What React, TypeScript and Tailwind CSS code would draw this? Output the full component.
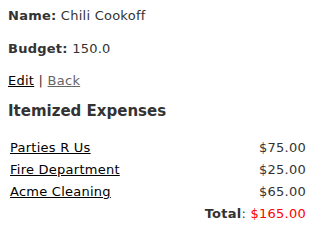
export default function App() {
  return (
    <div className="bg-white w-[323px] h-[237px] px-[8px] pt-[6px] text-[13px] leading-[20px] text-[#333] tracking-[0.25px]" style={{ fontFamily: '"DejaVu Sans", Verdana, sans-serif' }}>
      <p className="mb-[13px]"><b>Name:</b> Chili Cookoff</p>
      <p className="mb-[12px]"><b>Budget:</b> 150.0</p>
      <p className="mb-[10px]">
        <a href="#" className="underline text-black">Edit</a> | <a href="#" className="underline text-[#666]">Back</a>
      </p>
      <h3 className="text-[15px] font-bold leading-[20px] mb-[15px] tracking-normal">Itemized Expenses</h3>
      <table className="w-[300px] border-separate border-spacing-[2px]">
        <tbody>
          {[["Parties R Us", "$75.00"], ["Fire Department", "$25.00"], ["Acme Cleaning", "$65.00"]].map(([n, a]) => (
            <tr key={n}>
              <td className="p-0 leading-[20px]"><a href="#" className="underline text-black">{n}</a></td>
              <td className="p-0 text-right leading-[20px]">{a}</td>
            </tr>
          ))}
          <tr>
            <td></td>
            <td className="p-0 text-right leading-[20px]"><b>Total</b>: <span className="text-[#f00]">$165.00</span></td>
          </tr>
        </tbody>
      </table>
    </div>
  );
}
